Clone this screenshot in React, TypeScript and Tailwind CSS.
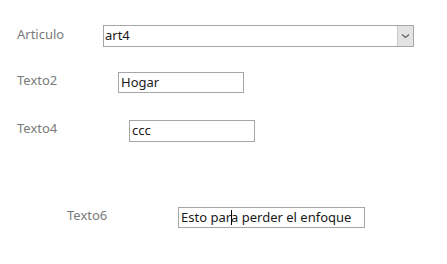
export default function App() {
  const label = "text-[13px] leading-none text-[#7a7a7a]";
  const box = "box-border flex items-center border border-[#a6a6a6] bg-white pl-[2px] text-[13px] leading-none text-[#1a1a1a]";
  return (
    <div className="h-[264px] w-[447px] bg-white font-['Noto_Sans',sans-serif]">
      <div className="pt-[25px]">
        <div className="flex h-[21px] items-center">
          <span className={`${label} ml-[17px] w-[86px] -mt-[3px]`}>Articulo</span>
          <div className="box-border flex h-[22px] w-[311px] border border-[#a6a6a6] bg-white">
            <span className="flex flex-1 items-center pl-[1px] text-[13px] leading-none text-[#1a1a1a]">art4</span>
            <div className="flex w-[16px] items-center justify-center border-l border-[#c8c8c8] bg-[#e3e3e3]">
              <svg width="9" height="6" viewBox="0 0 9 6" fill="none">
                <path d="M1 1.5 L4.5 4.5 L8 1.5" stroke="#606060" strokeWidth="1.2" />
              </svg>
            </div>
          </div>
        </div>

        <div className="mt-[26px] flex h-[21px] items-center">
          <span className={`${label} ml-[17px] w-[101px] -mt-[4px]`}>Texto2</span>
          <div className={`${box} h-[21px] w-[126px]`}>Hogar</div>
        </div>

        <div className="mt-[27px] flex h-[21px] items-center">
          <span className={`${label} ml-[17px] w-[112px] -mt-[4px]`}>Texto4</span>
          <div className={`${box} h-[22px] w-[126px] text-[12px]`}>ccc</div>
        </div>

        <div className="mt-[66px] flex h-[21px] items-center">
          <span className={`${label} ml-[67px] w-[111px] -mt-[4px]`}>Texto6</span>
          <div className={`${box} h-[21px] w-[187px]`}>
            Esto par
            <span className="mx-[-0.5px] inline-block h-[15px] w-[1px] bg-black" />
            a perder el enfoque
          </div>
        </div>
      </div>
    </div>
  );
}
